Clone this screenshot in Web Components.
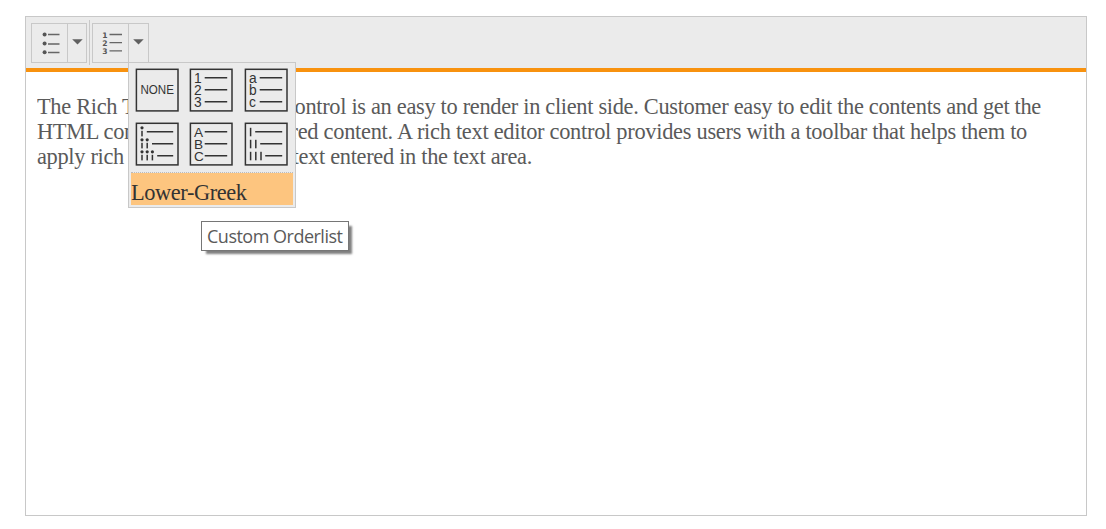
<!DOCTYPE html>
<html lang="en">
<head>
<meta charset="utf-8">
<title>Rich Text Editor</title>
<style>
body { margin: 0; padding: 16px 19px 13px 25px; background: #fff; font-family: "Liberation Serif", "Times New Roman", serif; color: #5a5a5a; }
</style>
</head>
<body>
<rte-editor>
  <rte-toolbar slot="toolbar">
    <rte-split kind="bullets"></rte-split>
    <rte-separator></rte-separator>
    <rte-split kind="numbers">
      <rte-list-menu>
        <rte-list-style kind="none"></rte-list-style>
        <rte-list-style kind="decimal"></rte-list-style>
        <rte-list-style kind="lower-alpha"></rte-list-style>
        <rte-list-style kind="lower-roman"></rte-list-style>
        <rte-list-style kind="upper-alpha"></rte-list-style>
        <rte-list-style kind="upper-roman"></rte-list-style>
        <span slot="custom">Lower-Greek</span>
        <rte-tooltip slot="tip">Custom Orderlist</rte-tooltip>
      </rte-list-menu>
    </rte-split>
  </rte-toolbar>
  <rte-line width="746.5" start="294.5"><span slot="before">The Rich T</span>ontrol is an easy to render in client side. Customer easy to edit the contents and get the</rte-line>
  <rte-line width="736.5" start="290.5"><span slot="before">HTML con</span>red content. A rich text editor control provides users with a toolbar that helps them to</rte-line>
  <rte-line width="239.5" start="292.5"><span slot="before">apply rich</span>text entered in the text area.</rte-line>
</rte-editor>
<script>
function define(name, markup, setup) {
  customElements.define(name, class extends HTMLElement {
    connectedCallback() {
      if (this.shadowRoot) return;
      const root = this.attachShadow({ mode: "open" });
      const t = document.createElement("template");
      t.innerHTML = typeof markup === "function" ? markup(this) : markup;
      root.append(t.content.cloneNode(true));
      if (setup) setup(this, root);
    }
  });
}

define("rte-editor", `
<style>
:host { display: flex; flex-direction: column; box-sizing: border-box; height: 500px; border: 1px solid #c8c8c8; }
.body { flex: 1; padding: 22px 11px; font-size: 22.4px; line-height: 25px; }
</style>
<slot name="toolbar"></slot><div class="body"><slot></slot></div>`);

define("rte-toolbar", `
<style>
:host { display: flex; align-items: flex-start; box-sizing: border-box; height: 55px; padding: 6px 5px 0; background: #ebebeb; border-bottom: 4px solid #f8920f; }
</style><slot></slot>`);

define("rte-separator", `
<style>:host { display: block; width: 1px; height: 45px; margin: -3px 2px 0; background: #c8c8c8; }</style>`);

const glyphs = {
  bullets: `<g fill="#555"><circle cx="13.6" cy="11.4" r="2"/><circle cx="13.6" cy="20.4" r="2"/><circle cx="13.6" cy="29.2" r="2"/></g>
    <path d="M17 11.5h11.5M17 21h11.5M17 29.5h11.5" stroke="#666" stroke-width="1.3"/>`,
  numbers: `<g fill="#555" font-family="DejaVu Sans" font-weight="700" font-size="7.6"><text x="10.2" y="14.9">1</text><text x="10.2" y="23.1">2</text><text x="10.2" y="31.3">3</text></g>
    <path d="M17.5 11.5h12.5M17.5 19.6h12.5M17.5 27.8h12.5" stroke="#666" stroke-width="1.3"/>`
};
define("rte-split", el => `
<style>
:host { display: flex; position: relative; box-sizing: border-box; height: 40px; border: 1px solid #c8c8c8; }
.main { width: 35px; border-right: 1px solid #c8c8c8; }
.arrow { width: ${el.getAttribute("kind") === "bullets" ? 18 : 19}px; }
svg { display: block; overflow: visible; margin-left: -1px; margin-top: -1px; }
::slotted(rte-list-menu) { position: absolute; left: 35px; top: 38px; z-index: 2; }
</style>
<div class="main"><svg width="36" height="39">${glyphs[el.getAttribute("kind")]}</svg></div>
<div class="arrow"><svg width="19" height="39"><path d="M5.2 16.2h10.5l-5.2 5.4z" fill="#606060"/></svg></div>
<slot></slot>`);

define("rte-list-menu", `
<style>
:host { display: block; box-sizing: border-box; width: 168px; height: 146px; padding: 5px 1px 0; background: #ebebeb; border: 1px solid #c8c8c8; }
.grid { display: grid; grid-template-columns: repeat(3, 54.3px); grid-auto-rows: 54px; padding-left: 5px; height: 104px; }
.custom { box-sizing: border-box; height: 33px; width: 162px; margin-left: 1px; border-top: 1px dotted #bbb; background: #fdc57f; background-clip: padding-box; color: #333; font-size: 22.4px; letter-spacing: -.42px; line-height: 39px; white-space: nowrap; }
::slotted(rte-tooltip) { position: absolute; left: 72px; top: 158px; }
</style>
<div class="grid"><slot></slot></div>
<div class="custom"><slot name="custom"></slot></div>
<slot name="tip"></slot>`);

const rows = (letters, size) => letters.map((c, i) =>
  `<text x="4.9" y="${14.5 + 12 * i}" font-size="${size}">${c}</text>`).join("");
const rules = starts => `<path d="${starts.map((x, i) => `M${x} ${9.8 + 12 * i}H38.2`).join("")}" stroke="#333" stroke-width="1.6"/>`;
const bar = (x, y, h) => `<rect x="${x - .75}" y="${y}" width="1.5" height="${h}"/>`;
const dotted = (x, y) => `<circle cx="${x}" cy="${y}" r="1.6"/>` + bar(x, y + 3, 5.6);
const previews = {
  "none": `<text x="5.4" y="26" font-size="12" textLength="33.5" lengthAdjust="spacingAndGlyphs">NONE</text>`,
  "decimal": rows(["1", "2", "3"], 13.8) + rules([15.7, 15.7, 15.7]),
  "lower-alpha": rows(["a", "b", "c"], 13.8) + rules([15.7, 15.7, 15.7]),
  "upper-alpha": rows(["A", "B", "C"], 13.6) + rules([15.7, 15.7, 15.7]),
  "lower-roman": dotted(7, 5.8) + dotted(7, 17.8) + dotted(12.2, 17.8) + dotted(7, 29.8) + dotted(12.2, 29.8) + dotted(17.4, 29.8) + rules([11.8, 17, 22.2]),
  "upper-roman": bar(6.6, 5.8, 8.5) + bar(6.6, 17.8, 8.5) + bar(11.8, 17.8, 8.5) + bar(6.6, 29.8, 8.5) + bar(11.8, 29.8, 8.5) + bar(17, 29.8, 8.5) + rules([11.2, 16.2, 21.2])
};
define("rte-list-style", el => `
<style>:host { display: block; height: 44px; } svg { display: block; }</style>
<svg width="44" height="44" fill="#333" font-family="Liberation Sans">
<rect x="1.4" y="1.3" width="41.6" height="41.6" fill="none" stroke="#333" stroke-width="1.5"/>${previews[el.getAttribute("kind")]}</svg>`);

define("rte-tooltip", `
<style>
:host { display: block; box-sizing: border-box; width: 148px; height: 30px; padding-left: 5px; border: 1px solid #767676; background: #fff; box-shadow: 4px 4px 2px -1px rgba(0,0,0,.5); color: #5a5a5a; font: 18px/29px "Open Sans", "Noto Sans", sans-serif; letter-spacing: -.5px; white-space: nowrap; }
</style><slot></slot>`);

/* One line of content, interrupted where the open menu covers it. */
define("rte-line", el => `
<style>
:host { display: flex; height: 25px; white-space: nowrap; }
.before { width: 91px; flex: none; overflow: hidden; letter-spacing: -.32px; }
.after { flex: none; margin-left: 168px; width: 760px; overflow: hidden; }
.text { display: inline-block; margin-left: ${Number(el.getAttribute("start")) - 296}px; }
</style><div class="before"><slot name="before"></slot></div><div class="after"><span class="text"><slot></slot></span></div>`, (el, root) => {
  const s = root.querySelector(".text");
  const w = s.getBoundingClientRect().width;
  s.style.letterSpacing = (Number(el.getAttribute("width")) - w) / el.lastChild.textContent.length + "px";
});
</script>
</body>
</html>
